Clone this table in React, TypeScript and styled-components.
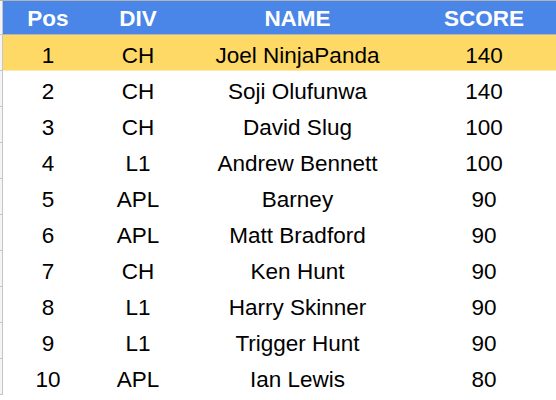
import React from "react";
import styled, { createGlobalStyle } from "styled-components";

const Global = createGlobalStyle`
  html, body { margin: 0; padding: 0; background: #ffffff; }
  body { font-family: "Liberation Sans", Arial, Helvetica, sans-serif; }
`;

const COLS = "3px 90px 90px 229px 1fr";

const Sheet = styled.div`
  width: 556px;
  height: 400px;
  overflow: hidden;
  background: #ffffff;
`;

const HeaderRow = styled.div`
  display: grid;
  grid-template-columns: ${COLS};
  height: 33px;
  border-top: 1px solid #b4b4b4;
  border-bottom: 1px solid #b4b4b4;
  background: #4a86e8;
`;

const BodyRow = styled.div<{ $highlight?: boolean }>`
  display: grid;
  grid-template-columns: ${COLS};
  height: 35px;
  border-bottom: 1px solid ${(p) => (p.$highlight ? "#fbe9b5" : "#ffffff")};
  background: ${(p) => (p.$highlight ? "#ffd966" : "#ffffff")};
`;

const Gutter = styled.div`
  background: #f4f4f4;
  border-right: 1px solid #c6c6c6;
  box-shadow: 0 1px 0 #c6c6c6;
  position: relative;
  z-index: 1;
`;

const HeadCell = styled.div`
  text-align: center;
  color: #ffffff;
  font-weight: bold;
  font-size: 22.5px;
  line-height: 30px;
  padding-top: 3px;
  white-space: nowrap;
`;

const Cell = styled.div`
  text-align: center;
  color: #000000;
  font-size: 22.5px;
  line-height: 29px;
  padding-top: 6px;
  white-space: nowrap;
`;

const rows = [
  ["1", "CH", "Joel NinjaPanda", "140"],
  ["2", "CH", "Soji Olufunwa", "140"],
  ["3", "CH", "David Slug", "100"],
  ["4", "L1", "Andrew Bennett", "100"],
  ["5", "APL", "Barney", "90"],
  ["6", "APL", "Matt Bradford", "90"],
  ["7", "CH", "Ken Hunt", "90"],
  ["8", "L1", "Harry Skinner", "90"],
  ["9", "L1", "Trigger Hunt", "90"],
  ["10", "APL", "Ian Lewis", "80"],
];

export default function App() {
  return (
    <Sheet>
      <Global />
      <HeaderRow>
        <Gutter />
        <HeadCell>Pos</HeadCell>
        <HeadCell>DIV</HeadCell>
        <HeadCell>NAME</HeadCell>
        <HeadCell>SCORE</HeadCell>
      </HeaderRow>
      {rows.map((r, i) => (
        <BodyRow key={r[0]} $highlight={i === 0}>
          <Gutter />
          {r.map((c, j) => (
            <Cell key={j}>{c}</Cell>
          ))}
        </BodyRow>
      ))}
    </Sheet>
  );
}
